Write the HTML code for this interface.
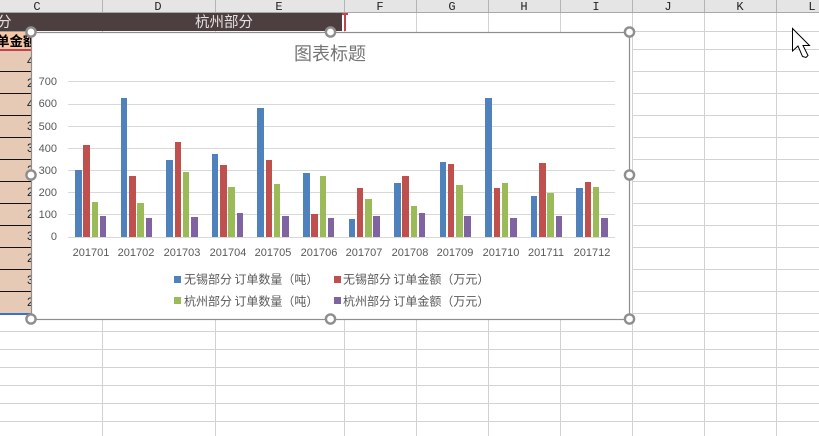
<!DOCTYPE html>
<html><head><meta charset="utf-8">
<style>
html,body{margin:0;padding:0;width:819px;height:436px;overflow:hidden;background:#fff}
svg{display:block}
text{font-family:"Liberation Sans","Noto Sans CJK SC",sans-serif}
.h{font-family:"Liberation Mono",monospace;font-size:12px;fill:#222;text-anchor:middle}
.y{font-size:11px;fill:#595959;text-anchor:end}
.x{font-size:11px;fill:#595959;text-anchor:middle}
.l{font-size:12px;fill:#595959;word-spacing:-1px}
.d{font-size:12px;fill:#123;font-family:"Liberation Sans",sans-serif;text-anchor:start}
.b rect{shape-rendering:crispEdges}
</style></head><body>
<svg width="819" height="436" viewBox="0 0 819 436" xmlns="http://www.w3.org/2000/svg">
<rect width="819" height="436" fill="#fff"/>
<!-- sheet grid -->
<g fill="#d2d2d2" class="b">
<rect x="0" y="331" width="819" height="1"/><rect x="0" y="349" width="819" height="1"/><rect x="0" y="367" width="819" height="1"/><rect x="0" y="385" width="819" height="1"/><rect x="0" y="403" width="819" height="1"/><rect x="0" y="421" width="819" height="1"/>
<rect x="632" y="31" width="187" height="1"/><rect x="632" y="49" width="187" height="1"/><rect x="632" y="71" width="187" height="1"/><rect x="632" y="93" width="187" height="1"/><rect x="632" y="115" width="187" height="1"/><rect x="632" y="137" width="187" height="1"/><rect x="632" y="159" width="187" height="1"/><rect x="632" y="181" width="187" height="1"/><rect x="632" y="203" width="187" height="1"/><rect x="632" y="225" width="187" height="1"/><rect x="632" y="247" width="187" height="1"/><rect x="632" y="269" width="187" height="1"/><rect x="632" y="291" width="187" height="1"/><rect x="632" y="313" width="187" height="1"/>
<rect x="102" y="13" width="1" height="423"/><rect x="215" y="13" width="1" height="423"/><rect x="344" y="13" width="1" height="423"/><rect x="416" y="13" width="1" height="423"/><rect x="488" y="13" width="1" height="423"/><rect x="560" y="13" width="1" height="423"/><rect x="632" y="13" width="1" height="423"/><rect x="704" y="13" width="1" height="423"/><rect x="776" y="13" width="1" height="423"/>
</g>
<!-- column headers -->
<rect x="0" y="0" width="819" height="12" fill="#e5e5e5"/>
<g fill="#b4b4b4" class="b">
<rect x="0" y="12" width="819" height="1" fill="#a8a8a8"/>
<rect x="102" y="0" width="1" height="12"/><rect x="215" y="0" width="1" height="12"/><rect x="344" y="0" width="1" height="12"/><rect x="416" y="0" width="1" height="12"/><rect x="488" y="0" width="1" height="12"/><rect x="560" y="0" width="1" height="12"/><rect x="632" y="0" width="1" height="12"/><rect x="704" y="0" width="1" height="12"/><rect x="776" y="0" width="1" height="12"/>
</g>
<text class="h" x="37" y="10">C</text><text class="h" x="158" y="10">D</text><text class="h" x="279" y="10">E</text><text class="h" x="380" y="10">F</text><text class="h" x="452" y="10">G</text><text class="h" x="524" y="10">H</text><text class="h" x="596" y="10">I</text><text class="h" x="668" y="10">J</text><text class="h" x="740" y="10">K</text><text class="h" x="812" y="10">L</text>
<!-- dark band -->
<rect x="0" y="13" width="342" height="18" fill="#4d3f3f"/>
<text x="-3" y="27" font-size="14.5" fill="#e4e0e0">分</text>
<text x="195" y="27" font-size="14.5" fill="#e4e0e0">杭州部分</text>
<rect x="342" y="13" width="6" height="2" fill="#c8404e"/><rect x="344" y="13" width="2" height="18" fill="#c8404e"/>
<!-- left clipped column -->
<rect x="0" y="31" width="31" height="18" fill="#f7c6a5"/>
<text x="-4" y="46" font-size="13.5" font-weight="bold" fill="#000">单金额</text>
<rect x="0" y="31" width="31" height="1" fill="#a0a0a0"/>
<rect x="0" y="49" width="31" height="2" fill="#c8404e"/>
<rect x="0" y="51" width="31" height="262" fill="#e6cab5"/>
<g fill="#111" class="b">
<rect x="0" y="71" width="31" height="1"/><rect x="0" y="93" width="31" height="1"/><rect x="0" y="115" width="31" height="1"/><rect x="0" y="137" width="31" height="1"/><rect x="0" y="159" width="31" height="1"/><rect x="0" y="181" width="31" height="1"/><rect x="0" y="203" width="31" height="1"/><rect x="0" y="225" width="31" height="1"/><rect x="0" y="247" width="31" height="1"/><rect x="0" y="269" width="31" height="1"/><rect x="0" y="291" width="31" height="1"/>
</g>
<rect x="0" y="313" width="31" height="2" fill="#3a72c4"/>
<g>
<text class="d" x="27" y="65">4</text><text class="d" x="27" y="87">2</text><text class="d" x="27" y="108">4</text><text class="d" x="27" y="130">3</text><text class="d" x="27" y="152">3</text><text class="d" x="27" y="174">2</text><text class="d" x="27" y="196">2</text><text class="d" x="27" y="218">2</text><text class="d" x="27" y="240">3</text><text class="d" x="27" y="262">2</text><text class="d" x="27" y="284">3</text><text class="d" x="27" y="306">2</text>
</g>
<!-- chart -->
<rect x="31.5" y="32.5" width="598" height="287" fill="#fff" stroke="#8e8e8e" stroke-width="1.2"/>
<text x="294" y="60" font-size="18" fill="#757575">图表标题</text>
<g fill="#d9d9d9" class="b">
<rect x="68" y="81" width="547" height="1"/><rect x="68" y="104" width="547" height="1"/><rect x="68" y="126" width="547" height="1"/><rect x="68" y="148" width="547" height="1"/><rect x="68" y="170" width="547" height="1"/><rect x="68" y="192" width="547" height="1"/><rect x="68" y="214" width="547" height="1"/><rect x="68" y="237" width="547" height="1"/>
</g>
<text class="y" x="57" y="85">700</text><text class="y" x="57" y="107">600</text><text class="y" x="57" y="130">500</text><text class="y" x="57" y="152">400</text><text class="y" x="57" y="174">300</text><text class="y" x="57" y="196">200</text><text class="y" x="57" y="218">100</text><text class="y" x="57" y="240">0</text>
<g class="b" fill="#4f81bd">
<rect x="75" y="170" width="7" height="67"/><rect x="121" y="98" width="6" height="139"/><rect x="166" y="160" width="7" height="77"/><rect x="212" y="154" width="6" height="83"/><rect x="257" y="108" width="7" height="129"/><rect x="303" y="173" width="7" height="64"/><rect x="349" y="219" width="6" height="18"/><rect x="394" y="183" width="7" height="54"/><rect x="440" y="162" width="6" height="75"/><rect x="485" y="98" width="7" height="139"/><rect x="531" y="196" width="6" height="41"/><rect x="576" y="188" width="7" height="49"/>
</g>
<g class="b" fill="#c0504d">
<rect x="83" y="145" width="7" height="92"/><rect x="129" y="176" width="7" height="61"/><rect x="175" y="142" width="6" height="95"/><rect x="220" y="165" width="7" height="72"/><rect x="266" y="160" width="6" height="77"/><rect x="311" y="214" width="7" height="23"/><rect x="357" y="188" width="6" height="49"/><rect x="402" y="176" width="7" height="61"/><rect x="448" y="164" width="6" height="73"/><rect x="494" y="188" width="6" height="49"/><rect x="539" y="163" width="7" height="74"/><rect x="585" y="182" width="6" height="55"/>
</g>
<g class="b" fill="#9bbb59">
<rect x="92" y="202" width="6" height="35"/><rect x="137" y="203" width="7" height="34"/><rect x="183" y="172" width="6" height="65"/><rect x="228" y="187" width="7" height="50"/><rect x="274" y="184" width="6" height="53"/><rect x="320" y="176" width="6" height="61"/><rect x="365" y="199" width="7" height="38"/><rect x="411" y="206" width="6" height="31"/><rect x="456" y="185" width="7" height="52"/><rect x="502" y="183" width="6" height="54"/><rect x="547" y="193" width="7" height="44"/><rect x="593" y="187" width="6" height="50"/>
</g>
<g class="b" fill="#8064a2">
<rect x="100" y="216" width="6" height="21"/><rect x="146" y="218" width="6" height="19"/><rect x="191" y="217" width="7" height="20"/><rect x="237" y="213" width="6" height="24"/><rect x="282" y="216" width="7" height="21"/><rect x="328" y="218" width="6" height="19"/><rect x="373" y="216" width="7" height="21"/><rect x="419" y="213" width="6" height="24"/><rect x="464" y="216" width="7" height="21"/><rect x="510" y="218" width="7" height="19"/><rect x="556" y="216" width="6" height="21"/><rect x="601" y="218" width="7" height="19"/>
</g>
<text class="x" x="91" y="256">201701</text><text class="x" x="136" y="256">201702</text><text class="x" x="182" y="256">201703</text><text class="x" x="228" y="256">201704</text><text class="x" x="273" y="256">201705</text><text class="x" x="319" y="256">201706</text><text class="x" x="364" y="256">201707</text><text class="x" x="410" y="256">201708</text><text class="x" x="455" y="256">201709</text><text class="x" x="501" y="256">201710</text><text class="x" x="546" y="256">201711</text><text class="x" x="592" y="256">201712</text>
<!-- legend -->
<rect x="174" y="276" width="7" height="7" fill="#4f81bd"/><text class="l" x="184" y="283.500">无锡部分 订单数量（吨）</text>
<rect x="334" y="276" width="7" height="7" fill="#c0504d"/><text class="l" x="343" y="283.500">无锡部分 订单金额（万元）</text>
<rect x="174" y="297" width="7" height="7" fill="#9bbb59"/><text class="l" x="184" y="305.500">杭州部分 订单数量（吨）</text>
<rect x="334" y="297" width="7" height="7" fill="#8064a2"/><text class="l" x="343" y="305.500">杭州部分 订单金额（万元）</text>
<!-- handles -->
<g fill="#fff" stroke="#8e8e8e" stroke-width="2.400">
<circle cx="31" cy="32" r="4.600"/><circle cx="330.500" cy="32" r="4.600"/><circle cx="629.500" cy="32" r="4.600"/><circle cx="31" cy="175" r="4.600"/><circle cx="629.500" cy="175" r="4.600"/><circle cx="31" cy="319" r="4.600"/><circle cx="330.500" cy="319" r="4.600"/><circle cx="629.500" cy="319" r="4.600"/>
</g>
<!-- cursor -->
<path d="M792.5 28.5 L792.5 51 L798 46 L802.500 56.500 L806 57.500 L808 55.500 L803 45.500 L809.500 45.500 Z" fill="#fff" stroke="#000" stroke-width="1"/>
</svg>
</body></html>
